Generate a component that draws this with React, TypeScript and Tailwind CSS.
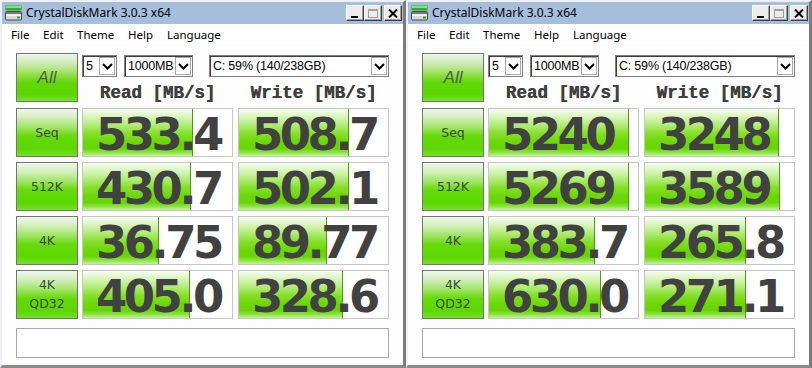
import React from "react";

type Row = { label: string[]; r: string; rf: number; w: string; wf: number };

const left: Row[] = [
  { label: ["Seq"], r: "533.4", rf: 110, w: "508.7", wf: 110 },
  { label: ["512K"], r: "430.7", rf: 108, w: "502.1", wf: 110 },
  { label: ["4K"], r: "36.75", rf: 76, w: "89.77", wf: 88 },
  { label: ["4K", "QD32"], r: "405.0", rf: 107, w: "328.6", wf: 104 },
];

const right: Row[] = [
  { label: ["Seq"], r: "5240", rf: 140, w: "3248", wf: 134 },
  { label: ["512K"], r: "5269", rf: 140, w: "3589", wf: 135 },
  { label: ["4K"], r: "383.7", rf: 106, w: "265.8", wf: 101 },
  { label: ["4K", "QD32"], r: "630.0", rf: 112, w: "271.1", wf: 101 },
];

function AppIcon() {
  return (
    <svg width="18" height="16" viewBox="0 0 18 16">
      <rect x="0.5" y="0.5" width="16" height="5" fill="#2fae2f" />
      <rect x="1" y="1" width="15" height="2" fill="#7fe27a" />
      <rect x="0.5" y="6.5" width="16" height="8.5" rx="1" fill="#d9d9d9" stroke="#4a4a4a" />
      <rect x="1" y="7" width="15" height="2" fill="#7a7a7a" />
      <rect x="1" y="9.5" width="15" height="1.5" fill="#f4f4f4" />
      <rect x="12" y="11.5" width="3" height="2" fill="#22b022" />
    </svg>
  );
}

function Chevron() {
  return (
    <svg width="11" height="7" viewBox="0 0 11 7">
      <polyline points="1,1 5.5,5.5 10,1" fill="none" stroke="#000" strokeWidth="2" />
    </svg>
  );
}

function Select({ w, text }: { w: string; text: string }) {
  return (
    <div
      className={`${w} h-[22px] flex items-center justify-between bg-white border border-[#7f7f7f] shadow-[inset_1px_1px_0_#3f3f3f] pl-[3px] pr-[1px]`}
    >
      <span className="font-['Liberation_Sans'] text-[12.5px] tracking-[-0.2px] leading-none text-black whitespace-nowrap">
        {text}
      </span>
      <div className="shrink-0 w-[16px] h-[18px] border border-[#a8a8a8] bg-white flex items-center justify-center">
        <Chevron />
      </div>
    </div>
  );
}

function TitleButton({ kind }: { kind: "min" | "max" | "close" }) {
  return (
    <div className="w-[18px] h-[16px] bg-[#ececec] border border-t-white border-l-white border-r-[#404040] border-b-[#404040] shadow-[inset_-1px_-1px_0_#a0a0a0] flex items-center justify-center">
      {kind === "min" && <div className="w-[7px] h-[2px] bg-black mt-[7px] mr-[2px]" />}
      {kind === "max" && <div className="w-[10px] h-[9px] border border-[#a0a0a0] border-t-2" />}
      {kind === "close" && (
        <svg width="10" height="9" viewBox="0 0 10 9">
          <path d="M1 0.5 L9 8.5 M9 0.5 L1 8.5" stroke="#000" strokeWidth="2" />
        </svg>
      )}
    </div>
  );
}

function Cell({ value, fill }: { value: string; fill: number }) {
  return (
    <div className="relative w-[151px] h-[49px] border border-[#c6c6c6] bg-white">
      <div
        className="absolute left-0 top-0 bottom-0 border-r border-r-[#4d9a14] bg-[linear-gradient(to_bottom,#f6fcf2_0%,#ddf6c4_14%,#b2ec78_34%,#86e02a_52%,#6cd806_70%,#66d600_84%,#90e44a_93%,#c4f29a_100%)]"
        style={{ width: fill }}
      />
      <div className="relative h-full pl-[13px] pt-[5px] font-['DejaVu_Sans'] font-bold text-[45px] leading-[42px] tracking-[-3.5px] text-[#414141] whitespace-nowrap">
        {value}
      </div>
    </div>
  );
}

function Label({ lines }: { lines: string[] }) {
  return (
    <div className="w-[62px] h-[49px] border border-[#6f7a6f] bg-[linear-gradient(to_bottom,#f0f6ec_0%,#d4efbe_18%,#9ee462_40%,#66da0a_58%,#5cd800_85%,#78de2c_100%)] flex flex-col items-center justify-center font-['DejaVu_Sans'] text-[12.5px] leading-[19px] text-[#3b4a36]">
      {lines.map((l) => (
        <span key={l}>{l}</span>
      ))}
    </div>
  );
}

function Window({ rows }: { rows: Row[] }) {
  return (
    <div className="w-[406px] h-[368px] flex flex-col bg-white border-l-2 border-t-2 border-l-[#eef0f3] border-t-[#eef0f3] border-r-[3px] border-b-[3px] border-r-[#7c7c7c] border-b-[#8a8a8a]">
      <div className="h-[22px] bg-[#a5bedb] flex items-center pl-[3px] pr-[1px]">
        <AppIcon />
        <span className="ml-[3px] font-['Noto_Sans'] text-[12px] text-black leading-none">
          CrystalDiskMark 3.0.3 x64
        </span>
        <div className="ml-auto flex items-center">
          <TitleButton kind="min" />
          <TitleButton kind="max" />
          <div className="w-[2px]" />
          <TitleButton kind="close" />
        </div>
      </div>
      <div className="h-[20px] flex items-center pl-[9px] pt-[1px] font-['Noto_Sans'] text-[11.5px] text-black leading-none">
        <span className="w-[32px]">File</span>
        <span className="w-[34px]">Edit</span>
        <span className="w-[51px]">Theme</span>
        <span className="w-[39px]">Help</span>
        <span>Language</span>
      </div>
      <div className="flex-1 bg-[#fdfdfd] pl-[14px] pt-[9px] flex flex-col">
        <div className="flex gap-[4px]">
          <div className="w-[62px] h-[49px] border border-[#6f7a6f] bg-[linear-gradient(to_bottom,#eef4ea_0%,#cfeab8_20%,#98e052_42%,#62d806_60%,#5ad600_86%,#7cde30_100%)] flex items-center justify-center">
            <span className="font-['Liberation_Sans'] italic text-[17px] text-[#4e5e48]">All</span>
          </div>
          <div className="w-[307px] flex flex-col">
            <div className="flex mt-[2px]">
              <Select w="w-[35px]" text="5" />
              <div className="w-[7px]" />
              <Select w="w-[69px]" text="1000MB" />
              <div className="w-[16px]" />
              <Select w="w-[180px]" text="C: 59% (140/238GB)" />
            </div>
            <div className="flex gap-[5px] flex-1 items-center pt-[8px]">
              <div className="w-[151px] text-center font-['Liberation_Mono'] font-bold text-[17.5px] leading-none text-[#3f3f3f] [text-shadow:0.5px_0_0_#3f3f3f]">
                Read [MB/s]
              </div>
              <div className="w-[151px] text-center font-['Liberation_Mono'] font-bold text-[17.5px] leading-none text-[#3f3f3f] [text-shadow:0.5px_0_0_#3f3f3f]">
                Write [MB/s]
              </div>
            </div>
          </div>
        </div>
        {rows.map((row) => (
          <div key={row.label.join()} className="flex gap-[4px] mt-[5px]">
            <Label lines={row.label} />
            <div className="flex gap-[5px]">
              <Cell value={row.r} fill={row.rf} />
              <Cell value={row.w} fill={row.wf} />
            </div>
          </div>
        ))}
        <div className="mt-[9px] w-[373px] h-[30px] border border-[#a9a9a9] bg-white" />
      </div>
    </div>
  );
}

export default function App() {
  return (
    <div className="w-[812px] h-[368px] flex bg-white overflow-hidden">
      <Window rows={left} />
      <Window rows={right} />
    </div>
  );
}
